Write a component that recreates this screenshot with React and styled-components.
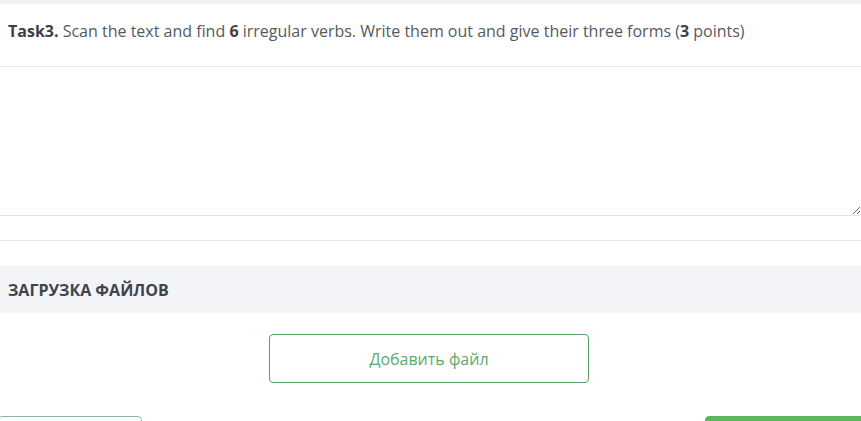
import React from 'react';
import styled, { createGlobalStyle } from 'styled-components';

const GlobalStyle = createGlobalStyle`
  html, body {
    margin: 0;
    padding: 0;
    background: #fff;
    font-family: "Open Sans", "Noto Sans", sans-serif;
    overflow: hidden;
  }
`;

const Page = styled.div`
  width: 861px;
  height: 421px;
  overflow: hidden;
  border-top: 4px solid #f3f3f3;
  box-sizing: border-box;
`;

const Question = styled.div`
  height: 63px;
  display: flex;
  align-items: center;
  padding: 0 8px 8px;
  font-size: 16px;
  color: #555a60;
  border-bottom: 1px solid #e4e4e4;
  box-sizing: border-box;
`;

const Strong = styled.b`
  color: #3c4046;
  font-weight: 700;
`;

const Answer = styled.textarea`
  display: block;
  width: 100%;
  height: 149px;
  margin: 0;
  border: none;
  border-bottom: 1px solid #e2e2e2;
  resize: vertical;
  outline: none;
  box-sizing: border-box;
  font-family: inherit;
`;

const Divider = styled.div`
  margin-top: 24px;
  border-top: 1px solid #e6e6e6;
`;

const SectionHead = styled.div`
  margin-top: 25px;
  height: 47px;
  background: #f3f4f7;
  display: flex;
  align-items: center;
  padding: 0 8px;
  font-size: 16px;
  font-weight: 700;
  color: #3f444a;
`;

const UploadRow = styled.div`
  display: flex;
  justify-content: center;
  padding-top: 21px;
  padding-right: 3px;
`;

const OutlineBtn = styled.button`
  width: 320px;
  height: 49px;
  background: #fff;
  border: 1px solid #5d9d66;
  border-radius: 4px;
  color: #5cab68;
  font-family: inherit;
  font-size: 16px;
  padding: 0;
`;

const Footer = styled.div`
  display: flex;
  justify-content: space-between;
  margin-top: 33px;
`;

const BackBtn = styled.button`
  width: 144px;
  height: 40px;
  margin-left: -2px;
  background: #fff;
  border: 1px solid #8db7b5;
  border-radius: 4px;
`;

const NextBtn = styled.button`
  width: 160px;
  height: 40px;
  margin-right: -4px;
  background: #5cb85c;
  border: 1px solid #56b35a;
  border-radius: 4px;
`;

export default function App() {
  return (
    <Page>
      <GlobalStyle />
      <Question>
        <span>
          <Strong>Task3.</Strong> Scan the text and find <Strong>6</Strong> irregular verbs. Write them out and give their three forms (<Strong>3</Strong> points)
        </span>
      </Question>
      <Answer />
      <Divider />
      <SectionHead>ЗАГРУЗКА ФАЙЛОВ</SectionHead>
      <UploadRow>
        <OutlineBtn type="button">Добавить файл</OutlineBtn>
      </UploadRow>
      <Footer>
        <BackBtn type="button" />
        <NextBtn type="button" />
      </Footer>
    </Page>
  );
}
